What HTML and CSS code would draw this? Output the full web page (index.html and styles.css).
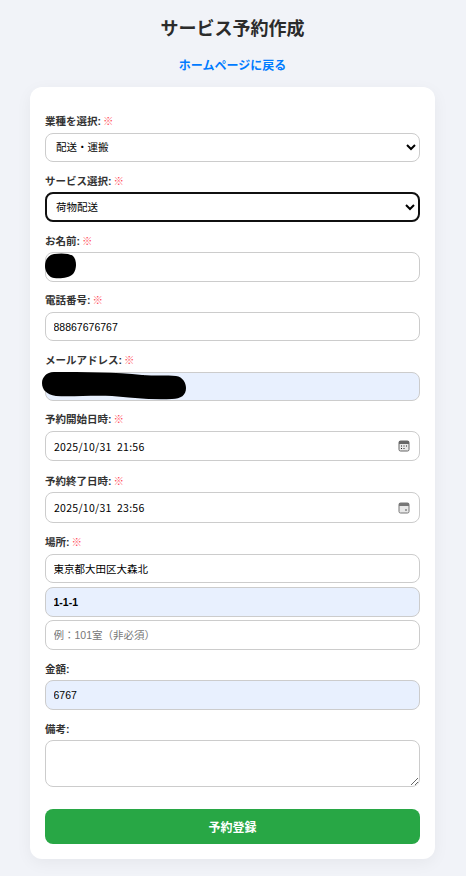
FILE: index.html
```html
<!DOCTYPE html>
<html lang="ja">
<head>
  <meta charset="UTF-8">
  <title>サービス予約作成</title>
  <link rel="stylesheet" href="styles.css">
</head>
<body>

  <h1>サービス予約作成</h1>
  <a href="#" class="home-link">ホームページに戻る</a>

  <form class="card">

    <div class="field">
      <label for="category">業種を選択: <span class="req">※</span></label>
      <select id="category">
        <option>配送・運搬</option>
      </select>
    </div>

    <div class="field">
      <label for="service">サービス選択: <span class="req">※</span></label>
      <select id="service" class="focused">
        <option>荷物配送</option>
      </select>
    </div>

    <div class="field">
      <label for="name">お名前: <span class="req">※</span></label>
      <div class="masked">
        <input type="text" id="name">
        <svg class="blob blob-name" width="32" height="26" viewBox="0 0 32 26">
          <path d="M9 1 C15 0 24 0 28 3 C32 7 32 16 28 21 C24 25 15 26 9 25 C3 24 0 18 0 13 C0 7 3 2 9 1 Z"/>
        </svg>
      </div>
    </div>

    <div class="field">
      <label for="tel">電話番号: <span class="req">※</span></label>
      <input type="text" id="tel" value="88867676767">
    </div>

    <div class="field field-email">
      <label for="email">メールアドレス: <span class="req">※</span></label>
      <div class="masked">
        <input type="text" id="email" class="autofill">
        <svg class="blob blob-email" width="144" height="28" viewBox="0 0 144 28">
          <path d="M12 0 C40 0 75 0 100 3 C112 4 125 3 134 4 C141 5 144 11 144 16 C144 23 139 27 130 27 C110 28 90 26 70 24 C50 23 30 25 14 24 C5 23 0 18 0 11 C0 5 5 0 12 0 Z"/>
        </svg>
      </div>
    </div>

    <div class="field field-date">
      <label for="start">予約開始日時: <span class="req">※</span></label>
      <div class="date-box">
        <input type="text" id="start" value="2025/10/31  21:56">
        <svg class="cal-icon" width="12" height="12" viewBox="0 0 12 12">
          <rect x="1" y="1" width="10" height="10" rx="1.5" fill="#e8e8e8" stroke="#666" stroke-width="1"/>
          <rect x="1" y="1" width="10" height="3" fill="#666"/>
          <path d="M3 6h1M5.500 6h1M8 6h1M3 8.500h1M5.500 8.500h1" stroke="#222" stroke-width="1"/>
        </svg>
      </div>
    </div>

    <div class="field field-date">
      <label for="end">予約終了日時: <span class="req">※</span></label>
      <div class="date-box">
        <input type="text" id="end" value="2025/10/31  23:56">
        <svg class="cal-icon" width="12" height="12" viewBox="0 0 12 12">
          <rect x="1" y="1" width="10" height="10" rx="1.5" fill="#e8e8e8" stroke="#777" stroke-width="1"/>
          <rect x="1" y="1" width="10" height="3" fill="#777"/>
          <path d="M7 8h2" stroke="#555" stroke-width="1"/>
        </svg>
      </div>
    </div>

    <div class="field">
      <label for="address">場所: <span class="req">※</span></label>
      <div class="address-group">
        <input type="text" id="address" value="東京都大田区大森北">
        <input type="text" class="autofill strong" value="1-1-1">
        <input type="text" placeholder="例：101室（非必須）">
      </div>
    </div>

    <div class="field">
      <label for="price">金額:</label>
      <input type="text" id="price" class="autofill" value="6767">
    </div>

    <div class="field">
      <label for="note">備考:</label>
      <textarea id="note"></textarea>
    </div>

    <button type="button" class="submit-btn">予約登録</button>

  </form>

</body>
</html>
```

FILE: styles.css
```css
* {
  box-sizing: border-box;
}

body {
  margin: 0;
  padding: 18px 31px 17px 30px;
  background-color: #f1f3f8;
  color: #2b2b2b;
  font-family: "Liberation Sans", "Noto Sans CJK JP", sans-serif;
}

h1 {
  margin: 0 0 17px;
  font-size: 18px;
  line-height: 22px;
  text-align: center;
  color: #2b2b2b;
}

.home-link {
  display: block;
  margin-bottom: 12px;
  font-size: 12px;
  font-weight: bold;
  line-height: 18px;
  text-align: center;
  text-decoration: none;
  color: #007bff;
}

.card {
  padding: 27px 15px 15px;
  background-color: #fff;
  border-radius: 12px;
  box-shadow: 0 4px 16px rgba(0, 0, 0, 0.05);
}

.field {
  margin-bottom: 11.800px;
}

.field-email {
  margin-bottom: 11.200px;
}

.field-date {
  margin-bottom: 12.500px;
}

label {
  display: block;
  margin-bottom: 4.600px;
  font-size: 10.500px;
  font-weight: bold;
  line-height: 14px;
  color: #333;
}

.req {
  margin-left: -1px;
  font-weight: normal;
  color: #ff4d5a;
}

input,
select,
textarea {
  display: block;
  width: 100%;
  height: 29.400px;
  padding: 0 7.500px;
  background-color: #fff;
  border: 1px solid #ccc;
  border-radius: 8px;
  font-family: "Liberation Sans", "Noto Sans CJK JP", sans-serif;
  font-size: 10.500px;
  color: #000;
}

select {
  padding-left: 6px;
}

select.focused {
  border: 2px solid #101010;
  padding-left: 5px;
}

input::placeholder {
  color: #777;
}

.autofill {
  background-color: #e8f0fe;
}

.strong {
  font-weight: bold;
}

.masked {
  position: relative;
}

.blob {
  position: absolute;
  fill: #000;
}

.blob-name {
  top: 1px;
  left: 0;
}

.blob-email {
  top: 0;
  left: -3px;
}

.date-box {
  display: flex;
  align-items: center;
  height: 30.500px;
  padding-right: 9px;
  background-color: #fff;
  border: 1px solid #ccc;
  border-radius: 8px;
}

.date-box input {
  flex: 1;
  min-width: 0;
  height: 100%;
  padding-left: 8px;
  border: none;
  background: none;
  letter-spacing: 0.28px;
  font-family: "Noto Sans CJK JP", sans-serif;
}

.address-group {
  display: flex;
  flex-direction: column;
  gap: 3.800px;
  margin-bottom: 12px;
}

textarea {
  height: 47px;
  padding: 8px;
  resize: vertical;
}

.submit-btn {
  display: block;
  width: 100%;
  height: 35px;
  margin-top: 21.600px;
  background-color: #28a745;
  border: none;
  border-radius: 8px;
  font-family: "Liberation Sans", "Noto Sans CJK JP", sans-serif;
  font-size: 12px;
  font-weight: bold;
  color: #fff;
}
```
